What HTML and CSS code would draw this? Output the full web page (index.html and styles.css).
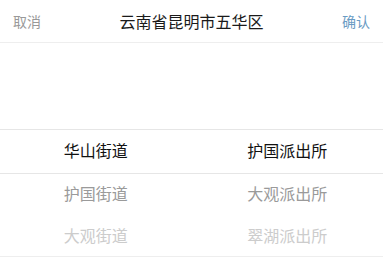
FILE: index.html
```html
<!DOCTYPE html>
<html lang="zh-CN">
<head>
    <meta charset="UTF-8">
    <meta name="viewport" content="width=device-width, initial-scale=1.0">
    <title>选择派出所</title>
    <link rel="stylesheet" href="styles.css">
</head>
<body>
    <!-- 顶部栏 -->
    <div class="picker-header">
        <span class="btn-cancel">取消</span>
        <span class="picker-title">云南省昆明市五华区</span>
        <span class="btn-confirm">确认</span>
    </div>

    <!-- 滚动选择区 -->
    <div class="picker-body">
        <div class="picker-mask"></div>
        <div class="picker-column">
            <div class="picker-item selected">华山街道</div>
            <div class="picker-item near">护国街道</div>
            <div class="picker-item far">大观街道</div>
        </div>
        <div class="picker-column">
            <div class="picker-item selected">护国派出所</div>
            <div class="picker-item near">大观派出所</div>
            <div class="picker-item far">翠湖派出所</div>
        </div>
    </div>
</body>
</html>
```

FILE: styles.css
```css
body {
    margin: 0;
    padding: 0;
    background-color: #fff;
    font-family: "Noto Sans CJK SC", "Noto Sans", sans-serif;
}

.picker-header {
    display: flex;
    align-items: center;
    justify-content: space-between;
    height: 42px;
    padding: 0 13px;
    border-bottom: 1px solid #eeeeee;
}

.btn-cancel {
    font-size: 14px;
    color: #999999;
}

.picker-title {
    font-size: 16px;
    color: #1a1a1a;
}

.btn-confirm {
    font-size: 14px;
    color: #6a9bc3;
}

/* 选择区 */
.picker-body {
    position: relative;
    display: flex;
    padding-top: 86px;
    height: 127px;
    border-bottom: 1px solid #eeeeee;
}

.picker-mask {
    position: absolute;
    left: 0;
    right: 0;
    top: 86px;
    height: 43px;
    border-top: 1px solid #e6e6e6;
    border-bottom: 1px solid #e6e6e6;
}

.picker-column {
    flex: 1;
    display: flex;
    flex-direction: column;
    align-items: center;
}

.picker-item {
    height: 43px;
    line-height: 42px;
    font-size: 16px;
}

.picker-item.selected {
    height: 44px;
    line-height: 43px;
    color: #111111;
}

.picker-item.near {
    color: #9a9a9a;
}

.picker-item.far {
    color: #cccccc;
}
```
